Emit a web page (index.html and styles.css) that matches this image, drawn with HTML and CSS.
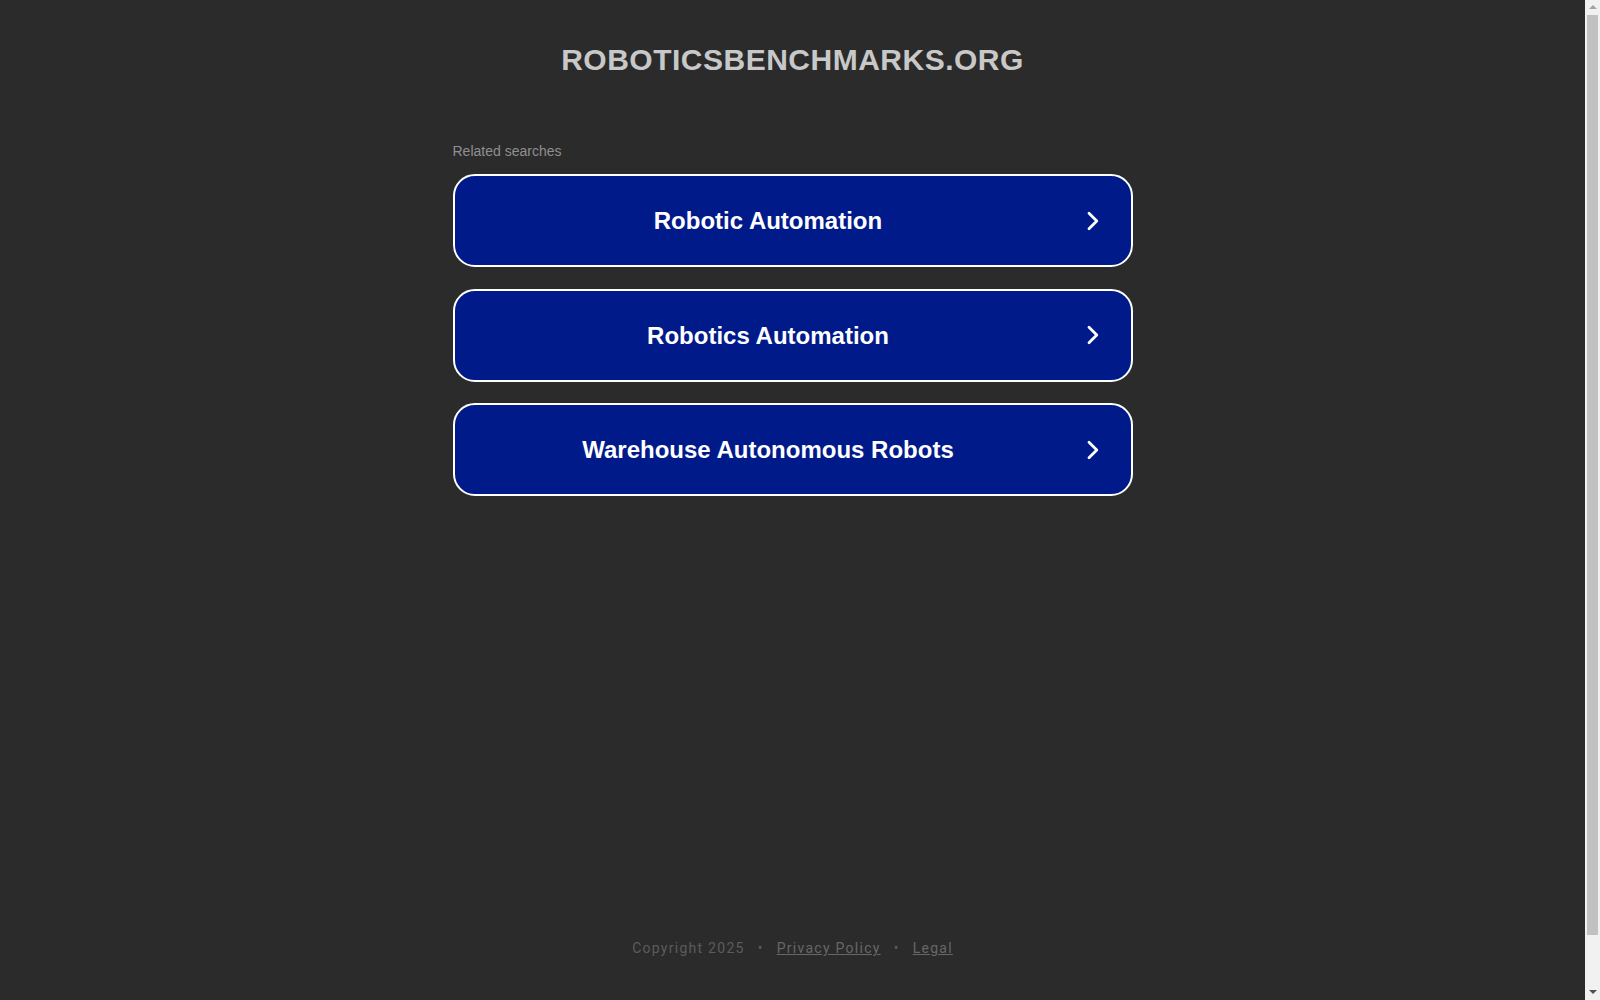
FILE: index.html
```html
<!DOCTYPE html>
<html lang="en">
<head>
<meta charset="utf-8">
<title>roboticsbenchmarks.org</title>
<link rel="stylesheet" href="styles.css">
</head>
<body>
<div class="page">
  <header class="header">
    <h1 class="domain">ROBOTICSBENCHMARKS.ORG</h1>
  </header>
  <main class="main">
    <div class="related">Related searches</div>
    <div class="list">
      <a class="item" href="#">
        <span class="label">Robotic Automation</span>
        <span class="arrow"><svg width="12" height="20" viewBox="0 0 12 20"><path d="M2 2.2 L9.8 10 L2 17.8" fill="none" stroke="#fff" stroke-width="2.8" stroke-linecap="round" stroke-linejoin="round"/></svg></span>
      </a>
      <a class="item" href="#">
        <span class="label">Robotics Automation</span>
        <span class="arrow"><svg width="12" height="20" viewBox="0 0 12 20"><path d="M2 2.2 L9.8 10 L2 17.8" fill="none" stroke="#fff" stroke-width="2.8" stroke-linecap="round" stroke-linejoin="round"/></svg></span>
      </a>
      <a class="item" href="#">
        <span class="label">Warehouse Autonomous Robots</span>
        <span class="arrow"><svg width="12" height="20" viewBox="0 0 12 20"><path d="M2 2.2 L9.8 10 L2 17.8" fill="none" stroke="#fff" stroke-width="2.8" stroke-linecap="round" stroke-linejoin="round"/></svg></span>
      </a>
    </div>
  </main>
  <footer class="footer">
    <span>Copyright 2025</span>
    <span class="dot">•</span>
    <a href="#">Privacy Policy</a>
    <span class="dot">•</span>
    <a href="#">Legal</a>
  </footer>
</div>
<div class="scrollbar" aria-hidden="true">
  <span class="sb-up"></span>
  <span class="sb-thumb"></span>
  <span class="sb-down"></span>
</div>
</body>
</html>
```

FILE: styles.css
```css
html, body {
  margin: 0;
  padding: 0;
  background: #2b2b2b;
  overflow: hidden;
}
body {
  font-family: "Liberation Sans", Arial, sans-serif;
}
.page {
  width: calc(100% - 15px);
  height: 100vh;
  display: flex;
  flex-direction: column;
  align-items: center;
}
.header {
  padding-top: 43px;
}
.domain {
  margin: 0;
  font-size: 30px;
  line-height: 34px;
  font-weight: bold;
  letter-spacing: 0.5px;
  color: #c8c8c8;
  text-align: center;
}
.main {
  width: 680px;
  margin-top: 66px;
}
.related {
  font-size: 14px;
  line-height: 16px;
  color: #8f8f8f;
  margin-bottom: 15px;
}
.list {
  display: flex;
  flex-direction: column;
  gap: 21.5px;
}
.item {
  display: flex;
  align-items: center;
  height: 89px;
  padding: 0 32px;
  border: 2px solid #ffffff;
  border-radius: 22px;
  background: #011a8a;
  color: #ffffff;
  text-decoration: none;
}
.label {
  flex: 1;
  text-align: center;
  font-size: 24px;
  line-height: 28px;
  padding-top: 1px;
  font-weight: bold;
}
.arrow {
  width: 49px;
  display: flex;
  justify-content: flex-end;
  align-items: center;
}
.arrow svg {
  display: block;
}
.footer {
  margin-top: auto;
  padding-bottom: 42px;
  font-family: Roboto, "Liberation Sans", sans-serif;
  font-size: 14px;
  line-height: 20px;
  letter-spacing: 1.27px;
  color: #5c5c5c;
  display: flex;
  align-items: center;
}
.footer a {
  color: #676767;
  text-decoration: underline;
}
.dot {
  margin: 0 13px;
}
.scrollbar {
  position: fixed;
  top: 0;
  right: 0;
  width: 15px;
  height: 100vh;
  background: #f1f1f1;
  display: flex;
  flex-direction: column;
  align-items: center;
}
.sb-up {
  margin-top: 5px;
  width: 0;
  height: 0;
  border-left: 4px solid transparent;
  border-right: 4px solid transparent;
  border-bottom: 4px solid #a3a3a3;
}
.sb-thumb {
  margin-top: 6px;
  width: 11px;
  height: 920px;
  background: #c1c1c1;
}
.sb-down {
  margin-top: auto;
  margin-bottom: 6px;
  width: 0;
  height: 0;
  border-left: 4px solid transparent;
  border-right: 4px solid transparent;
  border-top: 4px solid #505050;
}
```
